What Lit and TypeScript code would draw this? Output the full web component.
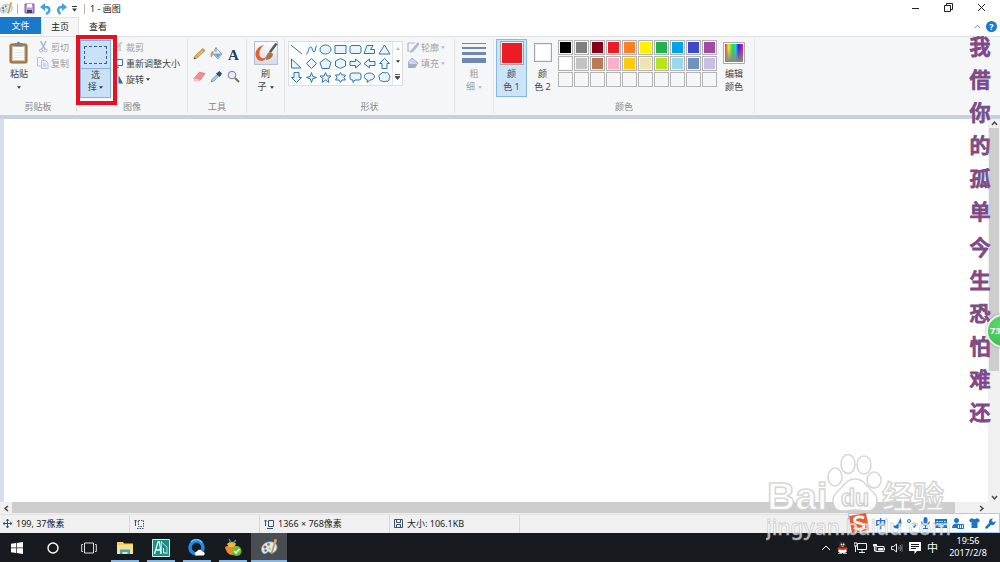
import { LitElement, html, svg, css, nothing, TemplateResult } from "lit";
import { customElement, property } from "lit/decorators.js";

const icon = (w: number, h: number, body: unknown, box = `0 0 ${w} ${h}`) =>
  html`<svg class="ico" width=${w} height=${h} viewBox=${box} fill="none" aria-hidden="true">${body}</svg>`;

const caret = (w = 5, color = "#333") =>
  icon(w, 3, svg`<path d="M0 0H5L2.500 3Z" fill=${color} />`, "0 0 5 3");

const palette = (s: number) =>
  icon(
    s,
    s,
    svg`<path d="M11 3C5 2 .5 6 .5 10.500c0 4 3.500 5 5 3.500s2-1.500 3.500-.5 5 .5 6.500-3C17 7 15 3.600 11 3Z" fill="#dcebf5" stroke="#7ba3c0" stroke-width=".8"/>
      <circle cx="4" cy="8" r="1.500" fill="#d9453a"/><circle cx="7.500" cy="5.500" r="1.400" fill="#4aa84e"/>
      <circle cx="4.500" cy="11.500" r="1.300" fill="#2e83d0"/><circle cx="8.500" cy="9.500" r="1.300" fill="#e8c33c"/>
      <path d="M14.500 1 10.500 15" stroke="#c79a5a" stroke-width="1.800"/><path d="M13.500 0l2.500.5-.8 3.500-2.400-.6Z" fill="#e9a84c"/>`,
    "0 0 17 17"
  );

const art: Record<string, () => TemplateResult> = {
  save: () =>
    icon(11, 11, svg`<path d="M1 1h9v9H1Z" fill="#b9a0d6" stroke="#7c5aa6"/><path d="M3 1h5v3.500H3Z" fill="#fff"/><path d="M3 7h5v3H3Z" fill="#4c3a70"/>`),
  undo: () => icon(11, 12, svg`<path d="M3 4h3c4.500 0 4.500 5 0 7" stroke="#3fa4e4" stroke-width="2.400"/><path d="M0 4 5 0v8Z" fill="#3fa4e4"/>`),
  redo: () => icon(11, 12, svg`<path d="M8 4H6C1.500 4 1 8 4.500 11" stroke="#3fa4e4" stroke-width="2.400"/><path d="M11 4 6 0v8Z" fill="#3fa4e4"/>`),
  paste: () =>
    icon(20, 24, svg`<rect x="1" y="3" width="17" height="19" rx="1.500" fill="#b58547" stroke="#8b6230"/><path d="M3.500 5.500h12v14h-12Z" fill="#fff" stroke="#c9c9c9" stroke-width=".5"/><path d="M5.500 2h2.500a1.500 1.500 0 0 1 3 0h2.500v3.500h-8Z" fill="#7c8188"/><path d="M5 9h9M5 11.500h9M5 14h9M5 16.500h9" stroke="#dfe5ec"/>`),
  cut: () =>
    icon(9, 12, svg`<path d="M1.500 0 6 8M7 0 3 8" stroke="#a9b4c6" stroke-width="1.400"/><circle cx="2" cy="9.500" r="1.500" stroke="#a9b4c6"/><circle cx="6.500" cy="9.500" r="1.500" stroke="#a9b4c6"/>`),
  copy: () =>
    icon(12, 12, svg`<path d="M.5.5h4l2 2V9h-6Z" fill="#f1f4f9" stroke="#b6c2d6"/><path d="M4.500 3.500h4l2.500 2.500v5.500H4.500Z" fill="#e6edf7" stroke="#b6c2d6"/><path d="M6 7h3M6 9h3" stroke="#b6c2d6"/>`),
  crop: () => icon(10, 10, svg`<path d="M1 2v6h7M9 0 2 8M3 2h4v7" stroke="#b8bec8" stroke-width="1.200"/>`),
  resize: () => icon(10, 10, svg`<path d="M1.500 1.500h8v6h-8Z" stroke="#2b78c0"/><path d="M0 9.500h6" stroke="#2b78c0"/>`),
  rotate: () => icon(10, 10, svg`<path d="M4 9.500V2l-4 7.500Z" fill="#9cc7e8"/><path d="M5.500 9.500V1l4.500 8.500Z" fill="#1f6fb5"/>`),
  pencil: () => icon(13, 13, svg`<path d="M1 12 2 9 10 1.500 12 3.500 4 11Z" fill="#e9b45a" stroke="#9a7431" stroke-width=".7"/><path d="M1 12l.5-1.600 1.200 1Z" fill="#333"/><path d="m9 2.500 2 2" stroke="#c77" />`),
  fill: () => icon(13, 13, svg`<path d="M6 1 12 7 8 12 2.500 6.500Z" fill="#e8eff7" stroke="#7d93ad" stroke-width=".8"/><path d="M3 6.500h8.500L8 11Z" fill="#6aa6dc"/><path d="M3 4C0 5 .5 8 1 10.500c1.500-1 2-2.500 2-4.500Z" fill="#e58a4c"/><path d="M6 0v5" stroke="#7d93ad"/>`),
  eraser: () => icon(13, 13, svg`<path d="M1 8.500 6.500 2 12 3.500 7 10.500 2 11Z" fill="#ef8f8c" stroke="#c76865" stroke-width=".6"/><path d="M1 8.500 6 9.500 7 10.500l-5 .5Z" fill="#fbd6d3"/>`),
  picker: () => icon(13, 13, svg`<path d="M1 12 2 9.500 7 4.500 8.500 6 4 11Z" fill="#a8d0ec" stroke="#5a7c9c" stroke-width=".7"/><path d="M6 3.500 9.500 7 10.500 6 12 3.500 9.500 1 7.500 2.500Z" fill="#24527e"/>`),
  zoom: () => icon(13, 13, svg`<circle cx="5" cy="5" r="3.700" fill="#e4eff8" stroke="#8793a0" stroke-width="1.200"/><path d="m8 8 4 4" stroke="#8a6a4a" stroke-width="2"/>`),
  brush: () =>
    icon(24, 24, svg`<defs><linearGradient id="bg" x2="0" y2="1"><stop stop-color="#fff"/><stop offset="1" stop-color="#cfdbe6"/></linearGradient></defs><path d="M.5.500h23v23H.5Z" fill="url(#bg)" stroke="#b5c0cc"/><path d="M10 4C5 5 1 9 1.500 14c.5 3 3 6 6 6s5-3 5.500-6C12 17 9 18 7 16.500 4 14 5 8 10 4Z" fill="#e8602c"/><path d="m22.500 2.500-6.500 8.500" stroke="#55595e" stroke-width="2.500"/><path d="M12 19c0-4 1-7 4-8.500l3 2.500c0 3-3 5.500-7 6Z" fill="#a9763c"/>`),
  outline: () => icon(12, 12, svg`<path d="M1 2h7M1 2v8h3M11 2 5 9l-1 2 2-1 6-7Z" stroke="#a9b7cc" stroke-width="1.200"/>`),
  fillGray: () => icon(12, 12, svg`<path d="M5 1 11 6 8 10.500H1.500V5Z" fill="#ccd6e6" stroke="#9fb0c9"/><path d="M2 7h8l-2 4H1Z" fill="#9fb0c9"/>`),
  lines: () => icon(24, 22, svg`<path d="M0 1.500h24" stroke="#6f87b2"/><path d="M0 6h24" stroke="#6f87b2" stroke-width="2"/><path d="M0 11.500h24" stroke="#6f87b2" stroke-width="3"/><path d="M0 18.500h24" stroke="#6f87b2" stroke-width="5"/>`),
  edit: () =>
    icon(22, 22, svg`<defs><linearGradient id="rb"><stop stop-color="#e33"/><stop offset=".2" stop-color="#ee3"/><stop offset=".42" stop-color="#2d4"/><stop offset=".6" stop-color="#2ce"/><stop offset=".75" stop-color="#32e"/><stop offset="1" stop-color="#e26"/></linearGradient><linearGradient id="gr" x2="0" y2="1"><stop offset=".2" stop-color="#888" stop-opacity="0"/><stop offset="1" stop-color="#888"/></linearGradient></defs><path d="M.5.500h21v21H.5Z" fill="#fff" stroke="#aaa"/><path d="M2 2h18v18H2Z" fill="url(#rb)"/><path d="M2 2h18v18H2Z" fill="url(#gr)"/>`),
  cross: () => icon(9, 9, svg`<path d="M4.500 0v9M0 4.500h9" stroke="#3a5272"/><path d="M3 2 4.500 0 6 2M3 7l1.500 2L6 7M2 3 0 4.500 2 6M7 3l2 1.500L7 6" stroke="#3a5272" stroke-width=".8"/>`),
  sel: () => icon(10, 10, svg`<path d="M1.500 1v6M0 2.500 1.500 1 3 2.500" stroke="#3a5272" /><path d="M4.500 1.500h5v6h-5ZM3 9.500h7" stroke="#3a5272" stroke-dasharray="1.500 1"/>`),
  size: () => icon(10, 10, svg`<path d="M1.500 1v6M0 2.500 1.500 1 3 2.500M4.500 1.500h5v6h-5ZM3 9.500h6" stroke="#3a5272"/>`),
  disk: () => icon(9, 9, svg`<path d="M.5.500h8v8h-8Z" stroke="#3a5272"/><path d="M2.500 1v2.500h4V1M2.500 8V5.500h4V8" stroke="#3a5272"/>`),
  win: () => icon(12, 12, svg`<path d="M0 1.700 5 1v4.600H0ZM5.700.9 12 0v5.600H5.700ZM0 6.300h5V11l-5-.7ZM5.700 6.300H12V12l-6.300-.9Z" fill="#fff"/>`),
  ring: () => icon(12, 12, svg`<circle cx="6" cy="6" r="5" stroke="#fff" stroke-width="1.400"/>`),
  views: () => icon(16, 12, svg`<path d="M3.500 1h9v10h-9ZM2 2.500H.7v7H2M14 2.500h1.300v7H14" stroke="#ddd"/>`),
  folder: () => icon(16, 14, svg`<path d="M0 1h6l1 1.500h9V13H0Z" fill="#f4cf63"/><path d="M0 4h16v9H0Z" fill="#fbe08a"/><path d="M3 13V8.500h10V13h-2.500v-2h-5v2Z" fill="#37a6e0"/>`),
  au: () => icon(18, 18, svg`<path d="M.5.500h17v17H.5Z" fill="#1d8d86" stroke="#d5efec"/><path d="M2.500 15 6 3h1.500L9 15M4 11h4" stroke="#e6fffb" stroke-width="1.300"/><path d="M9.500 2v13M9.500 3 15 8v7" stroke="#a8dcd6"/><path d="M11.500 9v5h3" stroke="#e6fffb"/>`),
  qb: () => icon(18, 18, svg`<circle cx="8.500" cy="8.500" r="6.500" stroke="#1f8be8" stroke-width="3.500"/><path d="M14 3.500a7 7 0 0 0-11-.5" stroke="#6cc3ff" stroke-width="1.500"/><path d="M8 16.500c-2-1.500-1-4 1-4 1-2.500 4.500-2.500 5 0 3 0 3.500 3 1.500 4Z" fill="#fff"/>`),
  fruit: () => icon(18, 18, svg`<path d="M1 8c3-2 11-2 14 0-1 5-4 8-7 8S2 13 1 8Z" fill="#f08a24"/><path d="M3 5c3-3 7-3 9 0l-2 3H5Z" fill="#f7b53c"/><path d="M7 4 5 0M9 4l3-3" stroke="#3aa0a8" stroke-width="1.300"/><circle cx="12.500" cy="12" r="5" fill="#6cbf2c"/><path d="m10 12 2 2 3.500-4" stroke="#fff" stroke-width="1.500"/>`),
  up: () => icon(10, 6, svg`<path d="m1 5 4-4 4 4" stroke="#fff"/>`),
  qq: () => icon(11, 12, svg`<ellipse cx="5.500" cy="3.500" rx="3" ry="3.500" fill="#222" stroke="#555" stroke-width=".5"/><path d="M2 6c1 1 6 1 7 0l.8 3.500c-1 2-7.600 2-8.600 0Z" fill="#fff"/><path d="M1.500 5c2 1.500 6 1.500 8 0l1.500 2.500-2 0c-2 .5-5 .5-7 0L0 7.500Z" fill="#e6261f"/><path d="M3.500 4h4l-2 1.200ZM1 11h4v1H1ZM6 11h4v1H6Z" fill="#f5a623"/><circle cx="4.500" cy="2.500" r=".9" fill="#fff"/><circle cx="6.600" cy="2.500" r=".9" fill="#fff"/>`),
  net: () => icon(13, 11, svg`<path d="M3.500 1.500h9v6h-9ZM8 8v2M5 10.500h6" stroke="#eee"/><path d="M0 1h3v3H0ZM1.500 4v6" stroke="#eee"/>`),
  bat: () => icon(12, 10, svg`<path d="M3 3.500h8v5H3Z" stroke="#eee"/><path d="M5 5h5v2.500H5ZM11 5h1v2h-1ZM0 1h4v2.500H0Z" fill="#eee"/><path d="M1.500 3.500V8H3" stroke="#eee"/>`),
  vol: () => icon(12, 10, svg`<path d="M.5 3.500h2l3-2.500v8l-3-2.500h-2Z" stroke="#eee"/><path d="M7.500 3.500c.8 1 .8 2 0 3M9 2c1.500 2 1.500 4 0 6" stroke="#ccc" stroke-width=".8"/><path d="M10.500 1c2 2.500 2 5.500 0 8" stroke="#777" stroke-width=".8"/>`),
  msg: () => icon(12, 12, svg`<path d="M0 0h12v9H8l-2.500 3V9H0Z" fill="#fff"/><path d="M2 2.500h8M2 4.500h8M2 6.500h5" stroke="#171b20"/>`),
  moon: () => icon(9, 11, svg`<path d="M7 0c3 4 1 10-3 10.500C2 11 0 9 0 7.500c3 1 6-2 7-7.500Z" fill="#1b74c8"/>`),
  punct: () => icon(9, 9, svg`<circle cx="2" cy="2" r="1.500" stroke="#1b74c8"/><path d="M6 5h2.500c0 2-1 3-2 3.500" stroke="#1b74c8" stroke-width="1.400"/>`),
  mic: () => icon(9, 12, svg`<rect x="2.500" width="4" height="7" rx="2" fill="#1b74c8"/><path d="M.7 4.500c0 5 7.600 5 7.600 0M4.500 8v3M2 11.500h5" stroke="#1b74c8" stroke-width="1.200"/>`),
  kbd: () => icon(12, 9, svg`<path d="M0 0h12v9H0Z" fill="#1b74c8"/><path d="M1.500 2.500h9M1.500 4.500h9" stroke="#fff" stroke-dasharray="1.500 1"/><path d="M3 7h6" stroke="#fff"/>`),
  user: () => icon(12, 11, svg`<circle cx="4.500" cy="2.500" r="2.500" fill="#1b74c8"/><path d="M0 10c0-6 8-6 9 0Z" fill="#1b74c8"/><path d="M5.500 6.500h6v4h-6Z" fill="#fff" stroke="#1b74c8"/><path d="M7.500 7v3M9.500 7v3" stroke="#1b74c8"/>`),
  shirt: () => icon(11, 10, svg`<path d="M3 0c1 1.500 4 1.500 5 0l3 2-1.500 2.500L8.500 4v6h-6V4l-1 .5L0 2Z" fill="#1b74c8"/>`),
  wrench: () => icon(11, 11, svg`<path d="m1.500 9.500 5-5" stroke="#1b74c8" stroke-width="2.500" stroke-linecap="round"/><path d="M10.500 3A3.300 3.300 0 1 1 8 .5L6.500 2.500l2 2Z" fill="#1b74c8"/>`),
};

const shapes: string[] = [
  "M1 1 12 10",
  "M1 10C4 10 3 3 5.500 3S7 8 9 8s1-6 3-6",
  "M12 5.500A5.500 4.500 0 1 1 1 5.500A5.500 4.500 0 1 1 12 5.500Z",
  "M1 1.500H12V9.500H1Z",
  "M3 1.500h7a2 2 0 0 1 2 2v4a2 2 0 0 1-2 2H3a2 2 0 0 1-2-2v-4a2 2 0 0 1 2-2Z",
  "M1 9.500 4 1.500H10L7.500 5.500H11.500V9.500Z",
  "M6.500 1 12 10H1Z",
  "M1.500 1V10H11Z",
  "M6.500.5 11.500 5.500 6.500 10.500 1.500 5.500Z",
  "M6.500.5 12 4.500 10 10.500H3L1 4.500Z",
  "M6.500.5 11.500 3V8L6.500 10.500 1.500 8V3Z",
  "M1 3.500H6.500V1L12 5.500 6.500 10V7.500H1Z",
  "M12 3.500H6.500V1L1 5.500 6.500 10V7.500H12Z",
  "M4 10.500V5.500H1.500L6.500.5 11.500 5.500H9V10.500Z",
  "M4 .5V5.500H1.500L6.500 10.500 11.500 5.500H9V.5Z",
  "M6.500.5 7.700 4.300 11.500 5.500 7.700 6.700 6.500 10.500 5.300 6.700 1.500 5.500 5.300 4.300Z",
  "M6.500.5 8 4H12L9 6.500 10 10.500 6.500 8 3 10.500 4 6.500 1 4H5Z",
  "M6.500.5 8 3H11.500L10 5.500 11.500 8H8L6.500 10.500 5 8H1.500L3 5.500 1.500 3H5Z",
  "M3 1h7a2 2 0 0 1 2 2v3a2 2 0 0 1-2 2H6L4 10.500V8H3a2 2 0 0 1-2-2V3a2 2 0 0 1 2-2Z",
  "M4 10.500 4.500 8C0 7 0 1 6.500 1S13 8 7 8Z",
  "M3 2C4 0 6 0 7 1c2-1 4 0 4 2 1.500 1 1 3 .2 3.500C11.500 9 9 10 8 9c-1 1-3 1-4 0-2 0-3-1-2.500-3C.5 4 1 2 3 2Z",
];

const swatches = [
  "#000000", "#7f7f7f", "#880015", "#ed1c24", "#ff7f27", "#fff200", "#22b14c", "#00a2e8", "#3f48cc", "#a349a4",
  "#ffffff", "#c3c3c3", "#b97a57", "#ffaec9", "#ffc90e", "#efe4b0", "#b5e61d", "#99d9ea", "#7092be", "#c8bfe7",
  ...Array<string>(10).fill(""),
];

const base = css`
  * { box-sizing: border-box; }
  .ico { display: block; flex: none; }
  button {
    font: inherit; color: inherit; background: none; border: 0; padding: 0; margin: 0;
    display: flex; align-items: center; justify-content: center;
  }
`;

@customElement("paint-ribbon")
class PaintRibbon extends LitElement {
  static styles = [base, css`
    :host { display: flex; background: #f5f6f7; border-top: 1px solid #dfe0e2; height: 79px; padding: 2px 0; color: #444; }
    .group { display: flex; flex-direction: column; border-right: 1px solid #e2e3e5; flex: none; }
    .body { flex: 1; display: flex; align-items: flex-start; }
    .label { text-align: center; color: #8a8a8a; line-height: 13px; }
    .clip { width: 77px; } .image { width: 111px; } .tools { width: 59px; } .brushes { width: 38px; }
    .shapes { width: 170px; } .weight { width: 39px; } .colors { width: 261px; }
    .big { flex-direction: column; gap: 1px; line-height: 12px; padding-top: 1px; }
    .big .row { display: flex; align-items: center; gap: 3px; }
    .big .art { height: 25px; display: flex; align-items: center; margin-bottom: 2px; }
    .list { display: flex; flex-direction: column; gap: 2px; padding-top: 1px; }
    .list button { height: 14px; justify-content: flex-start; gap: 2px; white-space: nowrap; }
    .list .slot { width: 12px; display: flex; justify-content: center; }
    .off { color: #a0a0a0; }
    .clip .body { padding-left: 9px; gap: 8px; }
    .caret-row { height: 12px; display: flex; align-items: center; }
    .select { position: relative; flex-direction: column; width: 31px; height: 58px; margin: 1px 0 0 3px; background: #c9e0f7; border: 1px solid #84b2e0; line-height: 12px; }
    .select .half { height: 28px; width: 100%; border-bottom: 1px solid #84b2e0; display: flex; align-items: center; justify-content: center; }
    .select .name { flex: 1; display: flex; flex-direction: column; align-items: center; }
    .marquee { width: 23px; height: 18px; border: 1px dashed #335f96; }
    .callout { position: absolute; inset: -6px -7px -8px -5px; border: 4px solid #e81123; }
    .image .list { margin-left: 1px; }
    .grid { display: grid; grid-template-columns: repeat(3, 17px); grid-auto-rows: 23px; padding: 8px 0 0 3px; }
    .glyph { font: bold 15px "Liberation Serif", serif; color: #23405f; }
    .brushes .body, .weight .body { justify-content: center; }
    .shapes .body { padding: 2px 0 0 3px; gap: 4px; }
    .shapes .list { padding-top: 0; margin-top: -1px; }
    .gallery { display: flex; border: 1px solid #dcdddf; background: #fbfcfe; height: 45px; }
    .cells { display: grid; grid-template-columns: repeat(7, 1fr); grid-auto-rows: 14px; width: 103px; }
    .scroll { width: 10px; border-left: 1px solid #e2e3e5; display: grid; }
    .colors .body { padding-left: 2px; }
    .one { width: 31px; height: 58px; background: #cce4fa; border: 1px solid #8ab8e4; justify-content: flex-start; padding-top: 0; }
    .two { width: 31px; }
    .chip { border: 1px solid #a5a5a5; box-shadow: inset 0 0 0 1px #eee; }
    .c1 { width: 24px; height: 24px; background: #ed1c24; }
    .c2 { width: 18px; height: 19px; background: #fff; }
    .palette { display: grid; grid-template-columns: repeat(10, 16px); grid-auto-rows: 16px; padding-top: 1px; }
    .sw { width: 15px; height: 15px; border: 1px solid #b4b4b4; padding: 1px; background: #f5f6f7; }
    .sw i { display: block; width: 100%; height: 100%; }
    .editor { margin-left: 5px; }
  `];

  private row(name: string, text: string, off = false, drop = false) {
    return html`<button class=${off ? "off" : ""}><span class="slot">${art[name]()}</span>${text}${drop ? caret(4, off ? "#b5b5b5" : "#333") : nothing}</button>`;
  }

  render() {
    return html`
      <section class="group clip">
        <div class="body">
          <button class="big"><span class="art">${art.paste()}</span><span>粘贴</span><span class="caret-row">${caret(4)}</span></button>
          <div class="list">${this.row("cut", "剪切", true)}${this.row("copy", "复制", true)}</div>
        </div>
        <div class="label">剪贴板</div>
      </section>
      <section class="group image">
        <div class="body">
          <button class="select">
            <span class="half"><span class="marquee"></span></span>
            <span class="name"><span>选</span><span class="caret-row">择&nbsp;${caret(4)}</span></span>
            <span class="callout"></span>
          </button>
          <div class="list">${this.row("crop", "裁剪", true)}${this.row("resize", "重新调整大小")}${this.row("rotate", "旋转", false, true)}</div>
        </div>
        <div class="label">图像</div>
      </section>
      <section class="group tools">
        <div class="body grid">
          <button aria-label="铅笔">${art.pencil()}</button><button aria-label="填充">${art.fill()}</button><button class="glyph">A</button>
          <button aria-label="橡皮擦">${art.eraser()}</button><button aria-label="取色">${art.picker()}</button><button aria-label="放大镜">${art.zoom()}</button>
        </div>
        <div class="label">工具</div>
      </section>
      <section class="group brushes">
        <div class="body"><button class="big"><span class="art">${art.brush()}</span><span>刷</span><span class="row">子${caret(4)}</span></button></div>
      </section>
      <section class="group shapes">
        <div class="body">
          <div class="gallery">
            <div class="cells">
              ${shapes.map((d) => html`<button aria-label="形状">${icon(13, 11, svg`<path d=${d} fill="#eaf4fc" stroke="#3474ac"/>`)}</button>`)}
            </div>
            <div class="scroll">
              <button aria-label="上">${icon(4, 3, svg`<path d="M0 3h4L2 0Z" fill="#bbb"/>`)}</button>
              <button aria-label="下">${caret(4)}</button>
              <button aria-label="更多">${icon(5, 6, svg`<path d="M0 .5h5M0 2.500h5L2.500 5.500Z" stroke="#444" stroke-width=".8" fill="#444"/>`)}</button>
            </div>
          </div>
          <div class="list">${this.row("outline", "轮廓", true, true)}${this.row("fillGray", "填充", true, true)}</div>
        </div>
        <div class="label">形状</div>
      </section>
      <section class="group weight">
        <div class="body"><button class="big off"><span class="art">${art.lines()}</span><span>粗</span><span class="row">细${caret(4, "#b5b5b5")}</span></button></div>
      </section>
      <section class="group colors">
        <div class="body">
          <button class="big one"><span class="art"><span class="chip c1"></span></span><span>颜</span><span>色 1</span></button>
          <button class="big two"><span class="art"><span class="chip c2"></span></span><span>颜</span><span>色 2</span></button>
          <div class="palette">
            ${swatches.map((c) => html`<button class="sw" aria-label=${c || "空"}>${c ? html`<i style="background:${c}"></i>` : nothing}</button>`)}
          </div>
          <button class="big editor"><span class="art">${art.edit()}</span><span>编辑</span><span>颜色</span></button>
        </div>
        <div class="label">颜色</div>
      </section>
    `;
  }
}

@customElement("task-bar")
class TaskBar extends LitElement {
  static styles = [base, css`
    :host { display: flex; background: #171b20; height: 29px; color: #fff; }
    .apps { display: flex; flex: 1; margin-left: -1px; }
    .app { width: 36px; border-top: 2px solid transparent; border-bottom: 2px solid transparent; position: relative; }
    .open::after { content: ""; position: absolute; left: 4px; right: 4px; bottom: -2px; height: 2px; background: #82b8e2; }
    .active { background: #4a4e53; border-color: #4a4e53; }
    .active::after { left: 0; right: 0; }
    .tray { display: flex; align-items: center; gap: 6px; }
    .lang { font-size: 11px; }
    .clock { width: 48px; text-align: center; line-height: 12px; margin: 0 8px 2px 0; }
  `];
  render() {
    const apps: [string, string][] = [["win", ""], ["ring", ""], ["views", ""], ["folder", "open"], ["au", "open"], ["qb", "open"], ["fruit", "open"]];
    return html`
      <nav class="apps">
        ${apps.map(([n, c]) => html`<button class="app ${c}" aria-label=${n}>${art[n]()}</button>`)}
        <button class="app open active" aria-label="画图">${palette(17)}</button>
      </nav>
      <div class="tray">
        ${art.up()}${art.qq()}${art.net()}${art.bat()}${art.vol()}${art.msg()}
        <span class="lang">中</span>
        <div class="clock">19:56<br />2017/2/8</div>
      </div>
    `;
  }
}

@customElement("app-root")
class AppRoot extends LitElement {
  @property() title = "1 - 画图";

  static styles = [base, css`
    :host {
      display: flex; flex-direction: column; position: relative; height: 100vh; overflow: hidden; background: #fff;
      font: 9px/13px "Noto Sans", "Noto Sans CJK SC", sans-serif; color: #222;
    }
    .title { display: flex; align-items: center; height: 17px; gap: 4px; flex: none; }
    .bar { width: 1px; height: 10px; background: #b5b5b5; margin: 0 2px 0 0; }
    .quick { gap: 5px; display: flex; align-items: center; margin-right: 3px; }
    .name { flex: 1; margin-left: -1px; }
    .win { display: flex; gap: 22px; margin: 0 13px 2px 0; }
    .win button { width: 11px; height: 11px; }
    .tabs { display: flex; height: 19px; flex: none; }
    .tab { width: 38px; height: 19px; padding-bottom: 1px; }
    .file { width: 41px; height: 17px; background: #1979ca; color: #fff; }
    .current { background: #f5f6f7; border: 1px solid #e2e3e5; border-bottom: 0; }
    .right { margin-left: auto; display: flex; align-items: center; gap: 5px; padding-right: 3px; }
    .help { width: 11px; height: 11px; border-radius: 50%; background: #1979ca; color: #fff; font-weight: bold; }
    .work { flex: 1; display: flex; border-top: 4px solid #c8d0e0; min-height: 0; }
    .edge { width: 4px; background: #d5deee; }
    .sheet { flex: 1; background: #fff; }
    .vbar { width: 12px; background: #f0f0f0; display: flex; flex-direction: column; padding: 0 1px; align-items: center; }
    .vthumb { width: 100%; background: #cdcdcd; flex: 2; }
    .vrest { flex: 1; }
    .vbar button { height: 9px; width: 10px; }
    .hbar { height: 12px; flex: none; background: #f0f0f0; display: flex; padding-right: 13px; }
    .hbar button { width: 12px; height: 12px; }
    .hthumb { background: #cdcdcd; flex: 1; height: 11px; margin-right: 20px; }
    .status { display: flex; height: 19px; background: #f0f0f0; border-top: 1px solid #e2e2e2; flex: none; }
    .cell { width: 130px; display: flex; align-items: center; gap: 4px; padding: 0 0 1px 3px; border-right: 1px solid #d9d9d9; }
    .cell + .cell { padding-left: 4px; }
    .verse { position: absolute; right: 8px; top: 35px; width: 24px; text-align: center;
      font: 500 21px/33px "Noto Sans CJK SC", sans-serif; color: #a8329f; -webkit-text-stroke: 1px #6d5480; }
    .verse p { margin: -6px 0 0; }
    .verse p + p { margin-top: 3px; }
    .ball { position: absolute; right: -20px; top: 314px; width: 34px; height: 34px; border-radius: 50%;
      background: radial-gradient(circle at 40% 30%, #5fd96d, #31b548);
      border: 2px solid #e9efe9; box-shadow: 0 0 2px #777; color: #fff; font-weight: bold; line-height: 30px; padding-left: 2px; }
    .ime { position: absolute; right: 0; bottom: 29px; height: 20px; display: flex; align-items: center; gap: 5px; background: #fff;
      border: 1px solid #a9cdf0; padding: 0 3px 0 26px; }
    .ime b { color: #1b74c8; font-size: 11px; margin-right: 2px; }
    .sogou { position: absolute; left: -1px; top: -1px; }
    .mark { position: absolute; right: 50px; bottom: 17px; opacity: 0.9; }
    .mark text { font-family: "Liberation Sans", "Noto Sans CJK SC", sans-serif; font-weight: bold; }
    .mark .site { font-family: "Noto Sans", sans-serif; font-weight: 500; }
  `];

  private chevron(d: string) {
    return icon(7, 7, svg`<path d=${d} stroke="#444" stroke-width="1.400"/>`);
  }

  render() {
    return html`
      <header class="title">
        ${palette(13)}<span class="bar"></span>
        <div class="quick">
          <button aria-label="保存">${art.save()}</button><button aria-label="撤消">${art.undo()}</button><button aria-label="重做">${art.redo()}</button>
          <button aria-label="自定义">${icon(5, 6, svg`<path d="M0 .5h5" stroke="#333"/><path d="M0 2.500h5L2.500 5.500Z" fill="#333"/>`)}</button>
        </div>
        <span class="bar"></span><span class="name">${this.title}</span>
        <div class="win">
          <button aria-label="最小化">${icon(9, 9, svg`<path d="M1 5.500h7" stroke="#222"/>`)}</button>
          <button aria-label="还原">${icon(9, 9, svg`<path d="M.5 2.500h6v6h-6ZM2.500 2.500v-2h6v6h-2" stroke="#222"/>`)}</button>
          <button aria-label="关闭">${icon(9, 9, svg`<path d="m1 1 7 7M8 1 1 8" stroke="#222"/>`)}</button>
        </div>
      </header>
      <nav class="tabs">
        <button class="tab file">文件</button><button class="tab current">主页</button><button class="tab">查看</button>
        <div class="right">${icon(7, 5, svg`<path d="m1 4 2.500-3L6 4" stroke="#999"/>`)}<button class="help">?</button></div>
      </nav>
      <paint-ribbon></paint-ribbon>
      <main class="work">
        <div class="edge"></div>
        <div class="sheet"></div>
        <div class="vbar">
          <button aria-label="上">${this.chevron("M1 5 3.500 2 6 5")}</button>
          <div class="vthumb"></div><div class="vrest"></div>
          <button aria-label="下">${this.chevron("M1 2 3.500 5 6 2")}</button>
        </div>
      </main>
      <div class="hbar">
        <button aria-label="左">${this.chevron("M5 1 2 3.500 5 6")}</button>
        <div class="hthumb"></div>
        <button aria-label="右">${this.chevron("M2 1 5 3.500 2 6")}</button>
      </div>
      <footer class="status">
        <span class="cell">${art.cross()}199, 37像素</span>
        <span class="cell">${art.sel()}</span>
        <span class="cell">${art.size()}1366 × 768像素</span>
        <span class="cell">${art.disk()}大小: 106.1KB</span>
      </footer>
      <task-bar></task-bar>
      <div class="verse"><p>我<br />借<br />你<br />的<br />孤<br />单</p><p>今<br />生<br />恐<br />怕<br />难<br />还</p></div>
      <div class="ball">73</div>
      <div class="ime">
        <svg class="sogou" width="22" height="21" viewBox="0 0 22 21" fill="none">
          <path d="M1 3 18 0l3 17-17 3.500Z" fill="#f0592b" />
          <path d="M16 5C12 3 6 4 6.500 7.500S16 9 16 13s-7 4-10 1.500" stroke="#fff" stroke-width="2.800" />
        </svg>
        <b>中</b>${art.moon()}${art.punct()}${art.mic()}${art.kbd()}${art.user()}${art.shirt()}${art.wrench()}
      </div>
      <svg class="mark" width="184" height="92" viewBox="0 0 184 92">
        <g fill="#fff" stroke="#d2d2d2" stroke-width="1.500">
          <ellipse cx="69" cy="24" rx="7" ry="9" /><ellipse cx="82" cy="11" rx="7" ry="9.500" />
          <ellipse cx="98" cy="12" rx="7" ry="9" /><ellipse cx="108" cy="27" rx="7" ry="8" />
          <path d="M89 26c9 0 11 7 17 12 9 8 5 20-5 20-4 0-8-1-12-1s-8 1-13 1c-9 0-13-12-4-20 6-5 8-12 17-12Z" />
          <text x="1" y="57" font-size="39">Bai</text>
          <text x="75" y="53" font-size="23">du</text>
          <text x="116" y="55" font-size="31">经验</text>
        </g>
        <text class="site" x="0" y="82" font-size="21" fill="#fff" fill-opacity=".8" stroke="#999" stroke-opacity=".5" stroke-width=".8">jingyan.baidu.com</text>
      </svg>
    `;
  }
}
